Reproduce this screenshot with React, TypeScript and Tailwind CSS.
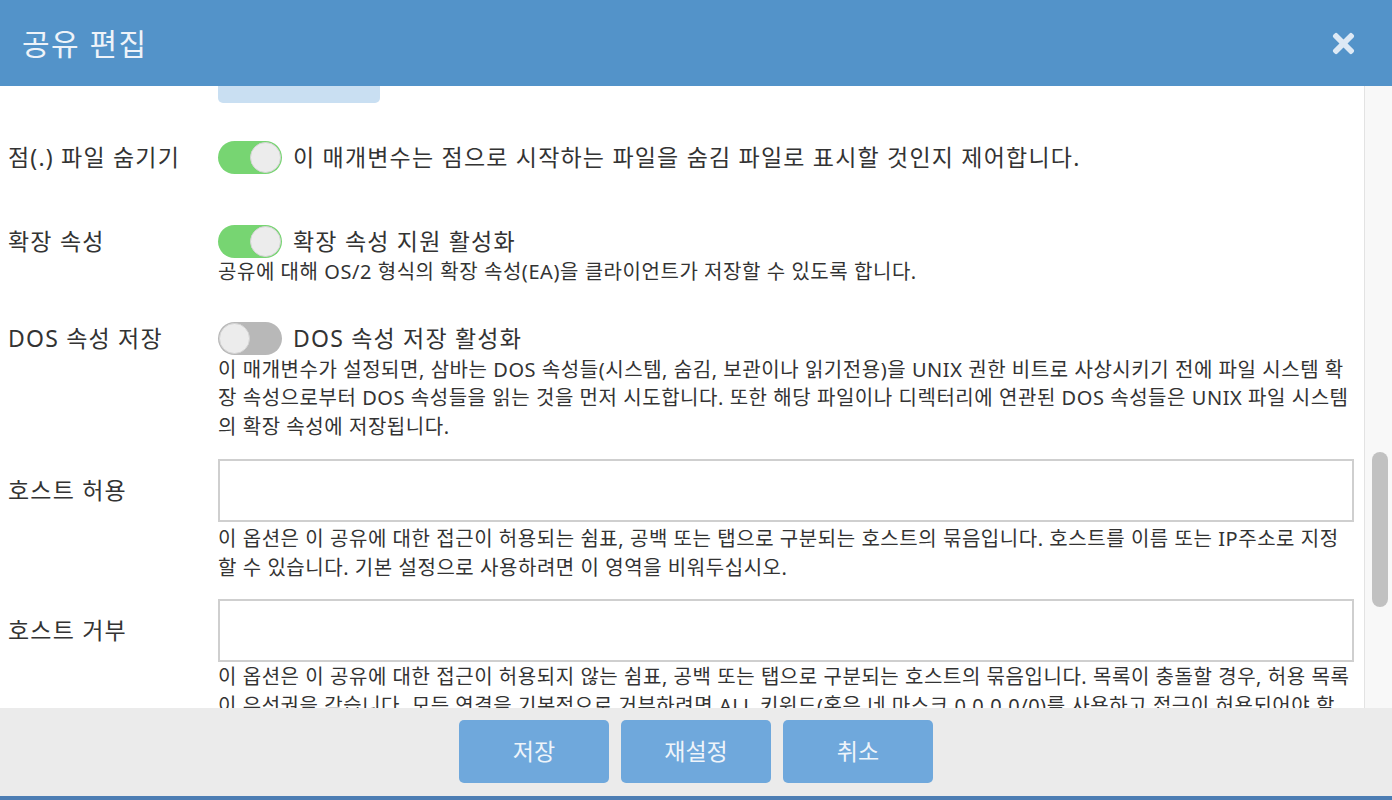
import { FaTimes } from 'react-icons/fa';

function Toggle({ on }: { on: boolean }) {
    return (
        <span
            className={`flex h-[33px] w-[64px] shrink-0 rounded-full p-[1px] ${
                on ? 'bg-[#77d572] justify-end' : 'bg-[#b8b8b8] justify-start'
            }`}
        >
            <span className="h-[31px] w-[31px] rounded-full border border-[#d4d4d4] bg-[#ececec]" />
        </span>
    );
}

function Label({ text, tall }: { text: string; tall?: boolean }) {
    return (
        <div
            className={`flex w-[218px] shrink-0 items-center pl-[8px] text-[23px] tracking-[1.2px] text-[#333] ${
                tall ? 'h-[63px]' : 'h-[34px]'
            }`}
        >
            {text}
        </div>
    );
}

function Help({ children }: { children: React.ReactNode }) {
    return <p className="text-[20px] leading-[28.5px] tracking-[0.55px] text-[#333]">{children}</p>;
}

export default function App() {
    return (
        <div className="flex h-[800px] w-[1392px] flex-col overflow-hidden bg-white font-['Noto_Sans','Noto_Sans_CJK_KR',sans-serif]">
            <header className="flex h-[86px] shrink-0 items-center justify-between bg-[#5393c9] pl-[22px] pr-[33px]">
                <h1 className="text-[30px] tracking-[1.5px] text-[#eef3f9]">공유 편집</h1>
                <FaTimes size={31} className="text-[#dde9f5]" />
            </header>

            <div className="flex h-[622px] shrink-0">
                <div className="flex-1 overflow-hidden pr-[10px]">
                    <div className="ml-[218px] h-[17px] w-[162px] rounded-b-[5px] bg-[#c9dff2]" />

                    <div className="mt-[37px] flex">
                        <Label text="점(.) 파일 숨기기" />
                        <div className="flex h-[34px] flex-1 items-center gap-[11px] text-[23px] tracking-[1.2px] text-[#333]">
                            <Toggle on />
                            <span>이 매개변수는 점으로 시작하는 파일을 숨김 파일로 표시할 것인지 제어합니다.</span>
                        </div>
                    </div>

                    <div className="mt-[50px] flex">
                        <Label text="확장 속성" />
                        <div className="flex-1">
                            <div className="flex h-[34px] items-center gap-[11px] text-[23px] tracking-[1.2px] text-[#333]">
                                <Toggle on />
                                <span>확장 속성 지원 활성화</span>
                            </div>
                            <Help>공유에 대해 OS/2 형식의 확장 속성(EA)을 클라이언트가 저장할 수 있도록 합니다.</Help>
                        </div>
                    </div>

                    <div className="mt-[35px] flex">
                        <Label text="DOS 속성 저장" />
                        <div className="flex-1">
                            <div className="flex h-[34px] items-center gap-[11px] text-[23px] tracking-[1.2px] text-[#333]">
                                <Toggle on={false} />
                                <span>DOS 속성 저장 활성화</span>
                            </div>
                            <Help>
                                이 매개변수가 설정되면, 삼바는 DOS 속성들(시스템, 숨김, 보관이나 읽기전용)을 UNIX 권한
                                비트로 사상시키기 전에 파일 시스템 확장 속성으로부터 DOS 속성들을 읽는 것을 먼저
                                시도합니다. 또한 해당 파일이나 디렉터리에 연관된 DOS 속성들은 UNIX 파일 시스템의 확장
                                속성에 저장됩니다.
                            </Help>
                        </div>
                    </div>

                    <div className="mt-[18px] flex">
                        <Label text="호스트 허용" tall />
                        <div className="flex-1">
                            <input
                                type="text"
                                className="h-[63px] w-full border-2 border-[#cfcfcf] bg-white px-3 text-[20px] outline-none"
                            />
                            <div className="mt-[3px]">
                                <Help>
                                    이 옵션은 이 공유에 대한 접근이 허용되는 쉼표, 공백 또는 탭으로 구분되는 호스트의
                                    묶음입니다. 호스트를 이름 또는 IP주소로 지정할 수 있습니다. 기본 설정으로 사용하려면 이
                                    영역을 비워두십시오.
                                </Help>
                            </div>
                        </div>
                    </div>

                    <div className="mt-[17px] flex">
                        <Label text="호스트 거부" tall />
                        <div className="flex-1">
                            <input
                                type="text"
                                className="h-[63px] w-full border-2 border-[#cfcfcf] bg-white px-3 text-[20px] outline-none"
                            />
                            <div className="mt-[1px]">
                                <Help>
                                    이 옵션은 이 공유에 대한 접근이 허용되지 않는 쉼표, 공백 또는 탭으로 구분되는 호스트의
                                    묶음입니다. 목록이 충돌할 경우, 허용 목록이 우선권을 갖습니다. 모든 연결을 기본적으로
                                    거부하려면 ALL 키워드(혹은 네 마스크 0.0.0.0/0)를 사용하고 접근이 허용되어야 할
                                    호스트를 허용 목록에 추가하십시오.
                                </Help>
                            </div>
                        </div>
                    </div>
                </div>

                <div className="w-[28px] shrink-0 border-l border-[#e3e3e3] bg-[#f8f8f8] pl-[7px] pt-[366px]">
                    <div className="h-[155px] w-[16px] rounded-full bg-[#c1c1c1]" />
                </div>
            </div>

            <footer className="flex h-[92px] shrink-0 justify-center gap-[12px] border-b-4 border-[#4c7db3] bg-[#ebebeb] pt-[12px]">
                <button className="h-[63px] w-[150px] rounded-[5px] bg-[#6fa8dc] text-[23px] text-[#eef4fa]">저장</button>
                <button className="h-[63px] w-[150px] rounded-[5px] bg-[#6fa8dc] text-[23px] text-[#eef4fa]">재설정</button>
                <button className="h-[63px] w-[150px] rounded-[5px] bg-[#6fa8dc] text-[23px] text-[#eef4fa]">취소</button>
            </footer>
        </div>
    );
}
